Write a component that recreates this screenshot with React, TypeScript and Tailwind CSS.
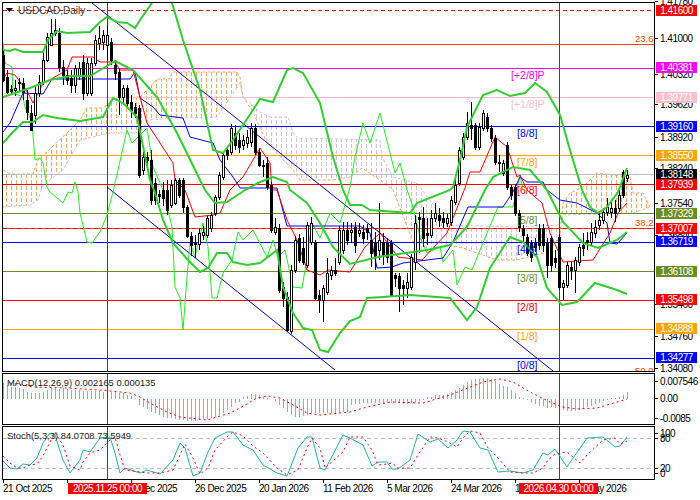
const candles: [number, number, number, number, number][] = [
  [55,80,50,82,1],[77,92,70,94,1],[89,91,85,95,1],[88,90,80,96,0],[82,83,78,92,1],[83,92,78,100,1],[100,112,90,120,1],[113,130,105,125,1],
  [93,115,85,124,0],[82,93,75,97,0],[60,82,52,85,0],[37,60,33,62,0],[33,45,19,45,0],[30,33,19,36,0],[33,67,28,72,1],[67,75,60,85,1],
  [75,80,70,85,1],[78,85,70,93,1],[68,85,65,93,0],[68,75,62,80,0],[62,93,55,100,1],[63,93,58,96,0],[63,93,58,96,0],[40,63,35,66,0],
  [38,43,26,50,0],[35,42,30,50,0],[35,45,25,60,0],[42,60,38,65,1],[65,73,60,80,1],[72,97,68,115,1],[88,97,85,105,0],[88,103,85,108,1],
  [102,110,95,118,1],[107,113,103,118,1],[108,175,105,178,1],[157,170,152,175,0],[157,160,152,165,1],[160,200,150,205,1],[183,200,178,205,1],[194,196,190,203,1],
  [190,198,182,206,1],[190,210,180,215,1],[185,205,180,208,0],[180,203,178,205,0],[180,195,178,198,1],[180,207,178,213,1],[207,236,205,238,1],[236,245,232,256,1],
  [243,244,235,258,1],[233,244,228,250,0],[232,235,226,240,0],[218,235,216,238,0],[215,228,212,232,0],[197,213,195,216,0],[175,197,172,200,0],[155,177,152,180,0],
  [150,155,147,160,1],[128,152,124,155,0],[133,145,125,150,1],[140,147,133,153,1],[140,145,135,150,0],[137,143,130,148,0],[128,142,123,147,0],[128,152,124,155,1],
  [152,165,149,167,1],[165,166,160,177,1],[163,187,157,190,1],[185,230,182,233,1],[227,232,218,235,0],[228,290,224,293,1],[287,298,282,307,1],[297,330,292,332,1],
  [270,331,265,334,0],[240,270,236,273,0],[238,260,234,263,1],[248,262,237,265,1],[225,265,222,268,0],[223,242,217,245,0],[242,298,240,300,1],[295,300,290,313,1],
  [288,300,285,322,0],[273,292,258,295,0],[270,275,266,280,0],[270,273,258,276,1],[230,262,226,265,0],[230,250,222,254,0],[230,240,222,245,1],[230,232,223,243,0],
  [227,245,222,253,1],[230,233,223,237,0],[232,238,225,244,1],[228,232,224,240,1],[240,253,223,267,1],[243,255,232,270,1],[240,250,203,260,0],[242,255,233,265,1],
  [243,257,238,263,1],[243,295,240,297,1],[275,278,273,287,1],[276,288,273,312,1],[285,288,280,305,1],[282,288,273,298,0],[257,287,254,290,0],[223,262,215,270,0],
  [217,219,212,253,1],[218,238,207,247,1],[233,235,218,245,1],[218,235,210,238,0],[213,218,203,222,0],[215,220,208,227,1],[218,222,212,228,1],[218,223,214,227,0],
  [200,222,196,226,0],[185,202,180,205,0],[150,183,147,186,0],[137,157,133,160,0],[123,137,112,140,0],[125,128,102,140,1],[125,147,123,150,1],[127,147,123,150,0],
  [113,128,110,131,0],[117,128,113,132,1],[128,138,125,142,1],[138,162,135,165,1],[162,163,155,172,1],[163,173,160,176,0],[145,187,142,190,1],[187,195,184,200,1],
  [187,213,184,216,1],[213,227,210,232,1],[228,235,225,242,1],[237,253,234,256,1],[243,257,240,262,1],[243,247,238,252,1],[228,245,224,250,1],[228,245,224,252,1],
  [243,265,238,278,1],[238,265,236,272,1],[258,262,250,268,1],[237,287,234,290,1],[283,287,280,300,0],[265,285,262,288,0],[267,270,262,280,1],[260,270,257,293,0],
  [247,262,244,266,0],[245,248,233,256,1],[240,242,232,250,1],[232,242,223,246,0],[227,233,220,238,0],[220,225,213,230,0],[212,220,208,224,0],[207,212,198,216,0],
  [208,212,200,218,0],[208,213,200,222,1],[195,208,190,212,0],[172,195,170,198,1],[175,178,170,182,0],
]

const hist = [
  38,45,50,52,55,58,66,68,70,68,65,60,55,55,58,55,56,60,60,60,62,62,62,64,64,65,63,66,66,68,70,74,78,85,
  105,110,118,125,130,135,140,143,145,148,150,150,152,153,152,150,148,147,145,140,135,128,120,110,100,95,
  82,78,73,72,75,80,85,88,92,105,115,125,135,142,142,138,135,130,130,130,130,130,130,130,128,125,125,
  105,103,102,100,100,100,100,100,100,100,100,100,100,102,102,100,95,92,90,
  82,80,76,75,74,72,65,60,55,45,37,30,28,26,24,25,27,33,42,47,52,60,68,80,84,90,
  100,103,107,108,113,112,113,115,120,122,122,122,120,118,112,108,102,100,93,90,85,83,80,75,67,
]

const bbUpperA = '3,50 10,51 15,49 23,52 43,52 48,40 57,31 67,33 90,32 100,22 107,17 117,22 127,23 135,28 140,20 152,3 155,-2'
const bbUpperB = '170,-2 172,3 183,40 200,90 213,150 223,153 233,140 253,110 260,99 273,102 287,70 293,68 303,73 320,103 333,157 343,190 350,205 362,205 370,210 410,213 417,203 450,190 453,187 460,160 467,127 483,95 497,90 510,96 525,93 535,83 547,92 560,115 570,150 582,190 590,207 598,213 607,207 618,192 627,168'
const bbMiddle = '3,97 30,88 50,80 70,76 90,76 107,66 115,61 133,70 157,97 177,133 200,180 205,190 215,203 227,202 245,190 260,182 273,177 287,182 290,190 307,203 320,223 333,247 350,264 378,257 392,255 427,250 450,245 467,227 485,190 493,177 513,167 530,170 547,190 563,222 583,243 598,248 617,240 627,232'
const bbLower = '3,143 13,132 23,122 33,122 43,115 57,118 80,121 103,117 113,98 123,103 137,117 150,180 155,193 163,220 173,243 188,260 200,272 208,268 217,253 227,253 233,262 247,265 260,263 277,250 283,287 293,313 303,328 312,330 320,350 328,352 340,333 350,321 360,317 367,298 383,297 410,295 450,298 467,320 477,307 490,268 510,237 523,242 537,257 547,288 562,305 577,302 595,283 617,290 627,294'
const redLine = '3,80 7,73 15,75 28,93 33,103 43,83 53,78 67,70 72,57 93,57 100,62 115,62 120,70 133,70 140,97 147,123 160,143 173,163 175,180 185,190 195,217 213,215 220,213 230,190 243,177 260,148 270,163 272,190 277,190 287,220 297,240 307,270 320,275 328,270 350,272 365,247 380,233 398,257 422,260 447,233 465,188 470,172 480,172 495,137 507,147 517,177 520,175 527,190 542,203 550,233 563,262 593,260 610,233 618,213 627,203'
const blueLine = '3,132 10,123 23,93 43,94 52,79 130,79 135,72 140,98 153,107 160,115 183,118 190,137 213,143 220,160 233,177 240,188 277,188 287,226 360,226 370,233 377,268 392,267 403,263 443,258 453,242 468,207 503,207 513,192 520,177 527,182 543,182 547,190 560,200 577,203 597,213 607,223 610,243 617,244 627,233'
const chikou = '3,42 5,63 12,67 13,93 23,97 25,107 32,122 35,160 40,158 43,163 47,187 50,192 63,203 68,192 72,193 75,182 78,192 80,213 87,242 92,243 100,232 107,215 113,192 127,130 132,143 147,128 153,167 163,190 172,227 175,287 180,298 183,330 187,277 190,243 195,257 203,223 208,247 212,298 217,298 223,273 232,260 238,232 243,240 253,230 267,257 273,240 278,257 285,250 293,287 302,288 305,270 312,223 320,238 330,213 340,223 350,187 355,157 363,123 370,143 380,113 395,173 400,163 407,190 413,207 420,237 427,253 440,247 443,262 453,250 457,285 465,267 472,270 487,233 498,207 513,207 520,175 523,190'

const spanOrange = '3,170 10,174 33,174 38,160 67,133 80,120 87,108 103,108 115,98 140,97 150,87 157,79 170,79 172,72 237,72 240,77 243,97 253,112 267,143 293,170 300,180 333,180 350,177 362,168 380,180 393,190 417,252 447,245 463,248 497,260 517,260 547,252 560,238 563,203 570,193 583,187 597,173 630,177 633,193 643,193 650,207'
const spanPlum = '3,207 30,205 38,200 43,185 63,170 80,140 110,133 140,133 148,120 187,117 203,118 217,117 240,83 243,97 260,112 270,117 288,117 293,133 298,138 380,140 382,157 393,177 417,183 435,207 447,225 517,227 560,225 563,215 633,213 650,207'
const cloudA = '3,170 10,174 33,174 38,160 67,133 80,120 87,108 103,108 115,98 140,97 150,87 157,79 170,79 172,72 237,72 240,77 243,97 240,83 217,117 203,118 187,117 148,120 140,133 110,133 80,140 63,170 43,185 38,200 30,205 3,207'
const cloudB = '243,97 260,112 270,117 288,117 293,133 298,138 380,140 382,157 393,177 417,183 435,207 447,225 517,227 560,225 560,238 547,252 517,260 497,260 463,248 447,245 417,252 393,190 380,180 362,168 350,177 333,180 300,180 293,170 267,143 253,112'
const cloudC = '563,215 563,203 570,193 583,187 597,173 630,177 633,193 643,193 650,207 633,213'

const macdSignal = '10,383 33,387 67,388 100,390 130,393 140,397 150,403 167,412 180,417 207,420 230,413 240,408 257,398 267,396 280,398 293,405 307,413 320,415 350,412 367,407 390,402 423,403 450,395 483,382 500,379 513,382 530,392 550,402 563,407 577,409 597,408 617,402 627,399'
const stochMain = '3,461 10,468 17,469 23,464 30,465 37,458 43,443 50,433 55,435 63,460 70,473 80,460 83,450 90,452 100,438 110,437 115,453 120,473 125,468 140,473 147,470 160,474 173,460 180,443 185,448 193,476 200,473 208,452 215,438 227,432 233,432 243,445 253,450 263,465 277,473 287,476 298,448 307,437 312,437 320,468 325,470 343,435 350,438 363,445 372,466 378,462 387,462 392,469 398,469 410,460 418,434 430,442 438,439 448,448 457,440 463,431 470,432 480,448 488,450 498,472 510,471 523,473 533,470 543,453 548,455 555,449 567,467 580,448 587,438 603,437 615,447 620,446 627,437'
const stochSignal = '3,456 10,463 17,468 23,468 30,465 37,464 43,456 50,442 55,433 63,445 70,466 80,470 83,462 90,453 100,450 110,440 115,437 120,455 125,470 140,472 147,473 160,473 173,470 180,455 185,444 193,458 200,474 208,468 215,450 227,437 233,432 243,436 253,446 263,453 277,468 287,475 298,470 307,448 312,438 320,448 325,468 343,452 350,437 363,437 372,450 378,465 387,464 392,463 398,468 410,468 418,455 430,437 438,438 448,442 457,447 463,438 470,431 480,433 488,448 498,458 510,472 523,473 533,473 543,468 548,460 555,454 567,452 580,463 587,455 603,440 615,438 620,444 627,441'

const hLines: [number, string, boolean?][] = [
  [10, '#ff0000', true], [44, '#ff4500'], [68, '#ff00ff'], [97, '#ffc0cb'], [126, '#0000ff'], [155, '#ffa500'], [174, '#c0c0c0'], [184, '#ff0000'],
  [213, '#6b8e23'], [228, '#ff4500'], [228, '#ff0000', true], [242, '#0000ff'], [271, '#6b8e23'], [300, '#ff0000'], [329, '#ffa500'], [358, '#0000ff'],
]

const murray: [string, number, string, number][] = [
  ['[+2/8]P', 75, '#ff00ff', 511], ['[+1/8]P', 104, '#ffc0cb', 511], ['[8/8]', 133, '#0000ff', 517], ['[7/8]', 162, '#ffa500', 517], ['[6/8]', 190, '#ff0000', 517],
  ['[5/8]', 220, '#6b8e23', 517], ['[4/8]', 249, '#0000ff', 517], ['[3/8]', 278, '#6b8e23', 517], ['[2/8]', 307, '#ff0000', 517], ['[1/8]', 336, '#ffa500', 517], ['[0/8]', 365, '#0000ff', 517],
]

const fibs: [string, number][] = [['23.6', 38], ['38.2', 222], ['50.0', 370]]

const axisText: [string, number][] = [
  ['1.41780', 1], ['1.41000', 38], ['1.40320', 74], ['1.39620', 104], ['1.38920', 137], ['1.38240', 168], ['1.37540', 203], ['1.36840', 235], ['1.35460', 304], ['1.34760', 336], ['1.34080', 368],
]

const axisBoxes: [string, number, string][] = [
  ['1.41600', 10, '#ff0000'], ['1.40381', 67, '#ff00ff'], ['1.39771', 97, '#ffc0cb'], ['1.39160', 126, '#0000ff'], ['1.38550', 155, '#ffa500'], ['1.38148', 174, '#000000'], ['1.37939', 184, '#ff0000'],
  ['1.37329', 213, '#6b8e23'], ['1.37007', 228, '#ff0000'], ['1.36719', 241, '#0000ff'], ['1.36108', 271, '#6b8e23'], ['1.35498', 299, '#ff0000'], ['1.34888', 328, '#ffa500'], ['1.34277', 357, '#0000ff'],
]

// one cell per 16 bars, two of them sit under the red crosshair dates
const dates = ['21 Oct 2025', '', '4 Dec 2025', '26 Dec 2025', '20 Jan 2026', '11 Feb 2026', '5 Mar 2026', '24 Mar 2026', '15 Apr 2026', '8 May 2026']

function Line({ points, color, width = 1, dash }: { points: string; color: string; width?: number; dash?: string }) {
  return <polyline points={points} fill="none" stroke={color} strokeWidth={width} strokeDasharray={dash} />
}

function Crosshairs({ y1, y2 }: { y1: number; y2: number }) {
  return (
    <g shapeRendering="crispEdges">
      <line x1={107.5} x2={107.5} y1={y1} y2={y2} stroke="#e00000" />
      <line x1={559.5} x2={559.5} y1={y1} y2={y2} stroke="#e00000" />
    </g>
  )
}

function MainChart() {
  return (
    <svg viewBox="3 3 651 368" className="absolute inset-0 block h-[368px] w-[651px]">
      <defs>
        <pattern id="hatchOrange" width="5" height="6" patternUnits="userSpaceOnUse">
          <rect x="1" y="0" width="1" height="4" fill="#f4a460" fillOpacity="0.95" />
        </pattern>
        <pattern id="hatchPlum" width="5" height="6" patternUnits="userSpaceOnUse">
          <rect x="1" y="0" width="1" height="4" fill="#d8bfd8" />
        </pattern>
      </defs>
      <polygon points={cloudA} fill="url(#hatchOrange)" />
      <polygon points={cloudB} fill="url(#hatchPlum)" />
      <polygon points={cloudC} fill="url(#hatchOrange)" />
      <Line points={spanOrange} color="#f4a460" dash="3 2" />
      <Line points={spanPlum} color="#d8bfd8" dash="3 2" />
      <g shapeRendering="crispEdges">
        {hLines.map(([y, color, dashed], i) => (
          <line key={i} x1={3} x2={654} y1={y + 0.5} y2={y + 0.5} stroke={color} strokeDasharray={dashed ? '4 3' : undefined} />
        ))}
      </g>
      <Crosshairs y1={3} y2={371} />
      <g stroke="#0000cc" fill="none">
        <line x1={92} y1={3} x2={553} y2={371} />
        <line x1={107} y1={187} x2={335} y2={370} />
      </g>
      <Line points={chikou} color="#22ee22" />
      <Line points={blueLine} color="#0000ff" />
      <Line points={redLine} color="#ff0000" />
      <g shapeRendering="crispEdges">
        {candles.map(([top, bot, hi, lo, black], i) => {
          const x = 3 + 4 * i
          return (
            <g key={i}>
              <line x1={x + 0.5} x2={x + 0.5} y1={hi} y2={lo} stroke="#000" />
              <rect x={x - 0.5} y={top + 0.5} width={2} height={Math.max(bot - top, 1)} fill={black ? '#000' : '#fff'} stroke="#000" />
            </g>
          )
        })}
      </g>
      <Line points={bbUpperA} color="#32cd32" width={2} />
      <Line points={bbUpperB} color="#32cd32" width={2} />
      <Line points={bbMiddle} color="#32cd32" width={2} />
      <Line points={bbLower} color="#32cd32" width={2} />
      <polygon points="6,8 13,8 9.5,12" fill="#000" />
      {murray.map(([text, y, color, x]) => (
        <text key={text} x={x} y={y + 3.5} fontSize={10.5} fill={color}>{text}</text>
      ))}
      {fibs.map(([text, y]) => (
        <text key={text} x={635} y={y + 4} fontSize={9.5} fill="#ff4500">{text}</text>
      ))}
      <text x={18} y={14} fontSize={10} fill="#333">USDCAD,Daily</text>
    </svg>
  )
}

function MacdChart() {
  return (
    <svg viewBox="3 374 651 50" className="absolute inset-0 block h-[50px] w-[651px]">
      <g shapeRendering="crispEdges">
        {hist.map((z, i) => {
          const x = 3 + 4 * i + 0.5
          return <line key={i} x1={x} x2={x} y1={370 + z / 3} y2={399} stroke="#48d1cc" />
        })}
      </g>
      <Crosshairs y1={374} y2={424} />
      <Line points={macdSignal} color="#ff0000" dash="2 3" />
      <text x={7} y={385.5} fontSize={9.4} fill="#222">MACD(12,26,9) 0.002165 0.000135</text>
    </svg>
  )
}

function StochChart() {
  return (
    <svg viewBox="3 427 651 52" className="absolute inset-0 block h-[52px] w-[651px]">
      <g shapeRendering="crispEdges">
        <line x1={3} x2={654} y1={438.5} y2={438.5} stroke="#c0c0c0" strokeDasharray="4 3" />
        <line x1={3} x2={654} y1={468.5} y2={468.5} stroke="#c0c0c0" strokeDasharray="4 3" />
      </g>
      <Crosshairs y1={427} y2={479} />
      <Line points={stochMain} color="#20b2aa" />
      <Line points={stochSignal} color="#ff0000" dash="2 3" />
      <text x={7} y={439} fontSize={9.4} fill="#222">Stoch(5,3,3) 84.0708 73.5949</text>
    </svg>
  )
}

function AxisLabel({ text, y, top }: { text: string; y: number; top: number }) {
  return (
    <span className="absolute left-[5px] whitespace-nowrap leading-[11px] text-black" style={{ top: y - top - 5 }}>
      <span className="absolute left-[-5px] top-[5px] h-px w-[3px] bg-black" />
      {text}
    </span>
  )
}

export default function App() {
  return (
    <div className="flex h-[500px] w-[700px] flex-col overflow-hidden bg-white pl-[2px] pt-[2px] font-['Liberation_Sans',Arial,sans-serif] text-[10px] tracking-[-0.5px]">
      <div className="flex h-[370px]">
        <div className="relative w-[653px] overflow-hidden border border-black tracking-normal">
          <MainChart />
        </div>
        <div className="relative flex-1">
          {axisText.map(([text, y]) => <AxisLabel key={text} text={text} y={y} top={2} />)}
          {axisBoxes.map(([text, y, color]) => (
            <span key={text} className="absolute left-px flex h-[11px] w-[41px] items-center justify-center leading-none text-white" style={{ top: y - 7, backgroundColor: color }}>{text}</span>
          ))}
        </div>
      </div>
      <div className="mt-px flex h-[52px]">
        <div className="relative w-[653px] overflow-hidden border border-black tracking-normal">
          <MacdChart />
        </div>
        <div className="relative flex-1">
          <AxisLabel text="0.007546" y={381} top={373} />
          <AxisLabel text="0.00" y={398} top={373} />
          <AxisLabel text="-0.0085" y={418} top={373} />
        </div>
      </div>
      <div className="mt-px flex h-[54px]">
        <div className="relative w-[653px] overflow-hidden border border-black tracking-normal">
          <StochChart />
        </div>
        <div className="relative flex-1">
          <AxisLabel text="100" y={433} top={426} />
          <AxisLabel text="80" y={438} top={426} />
          <AxisLabel text="20" y={468} top={426} />
          <AxisLabel text="0" y={473} top={426} />
        </div>
      </div>
      <div className="relative flex h-[20px] w-[653px] pl-px">
        {dates.map((text, i) => (
          <div key={i} className="w-[64px] shrink-0">
            <div className="h-[3px] w-px bg-black" />
            <div className="whitespace-nowrap leading-[11px] text-black">{text}</div>
          </div>
        ))}
        <span className="absolute left-[66px] top-[3px] flex h-[11px] w-[79px] items-center justify-center leading-none text-white bg-[#ff0000]">2025.11.25 00:00</span>
        <span className="absolute left-[517px] top-[3px] flex h-[11px] w-[79px] items-center justify-center leading-none text-white bg-[#ff0000]">2026.04.30 00:00</span>
      </div>
    </div>
  )
}
